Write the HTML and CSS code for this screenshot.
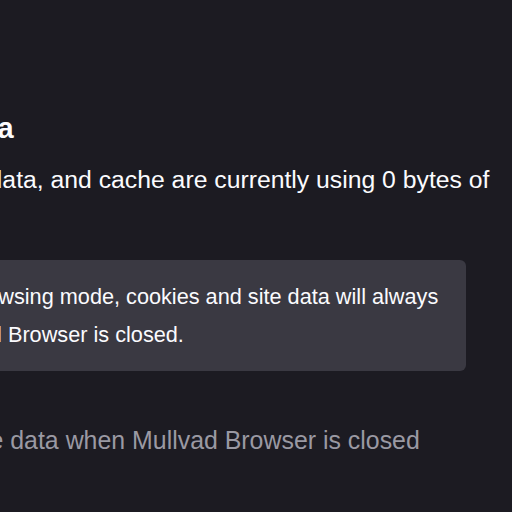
FILE: index.html
```html
<!DOCTYPE html>
<html lang="en">
<head>
<meta charset="utf-8">
<title>Cookies and Site Data</title>
<link rel="stylesheet" href="styles.css">
</head>
<body>
<main class="page">
  <section class="section">
    <h2 class="section-title">Cookies and Site Data</h2>
    <p class="description">Your stored cookies, site data, and cache are currently using 0 bytes of disk space.</p>
    <div class="message-bar">
      <svg class="info-icon" viewBox="0 0 16 16" width="26" height="26" aria-hidden="true">
        <circle cx="8" cy="8" r="7" fill="none" stroke="#80ebff" stroke-width="1.5"/>
        <rect x="7.25" y="7" width="1.5" height="5" fill="#80ebff"/>
        <circle cx="8" cy="4.8" r="0.9" fill="#80ebff"/>
      </svg>
      <p class="message-text">In permanent private browsing mode, cookies and site data will always be cleared when Mullvad Browser is closed.</p>
    </div>
    <label class="checkbox-row">
      <span class="checkbox"></span>
      <span class="checkbox-label">Delete cookies and site data when Mullvad Browser is closed</span>
    </label>
  </section>
</main>
</body>
</html>
```
FILE: styles.css
```css
html, body {
  margin: 0;
  padding: 0;
  background: #1c1b22;
  overflow: hidden;
}

body {
  font-family: "Liberation Sans", Arial, sans-serif;
  color: #fbfbfe;
  width: 512px;
  height: 512px;
}

.page {
  margin-left: -287px;
  width: 800px;
  padding-top: 111px;
}

.section {
  display: flex;
  flex-direction: column;
  align-items: flex-start;
}

.section-title {
  margin: 0 0 0 -4px;
  font-size: 29px;
  line-height: 34px;
  font-weight: 700;
}

.description {
  margin: 16px 0 0;
  font-size: 24.75px;
  line-height: 37.1px;
  width: 800px;
}

.message-bar {
  box-sizing: border-box;
  width: 753px;
  margin-top: 25px;
  background: #3a3942;
  border-radius: 6px;
  padding: 17.5px 16px 17.5px 16px;
  display: flex;
  align-items: flex-start;
  gap: 7px;
}

.info-icon {
  flex: none;
  margin-top: 6px;
}

.message-text {
  margin: 0;
  font-size: 21.7px;
  line-height: 38px;
}

.checkbox-row {
  display: flex;
  align-items: center;
  gap: 7px;
  margin-top: 51px;
  color: #9a99a3;
}

.checkbox {
  width: 26px;
  height: 26px;
  box-sizing: border-box;
  border: 2px solid #6b6a73;
  border-radius: 4px;
  flex: none;
}

.checkbox-label {
  font-size: 24.9px;
  line-height: 37.1px;
}
```
